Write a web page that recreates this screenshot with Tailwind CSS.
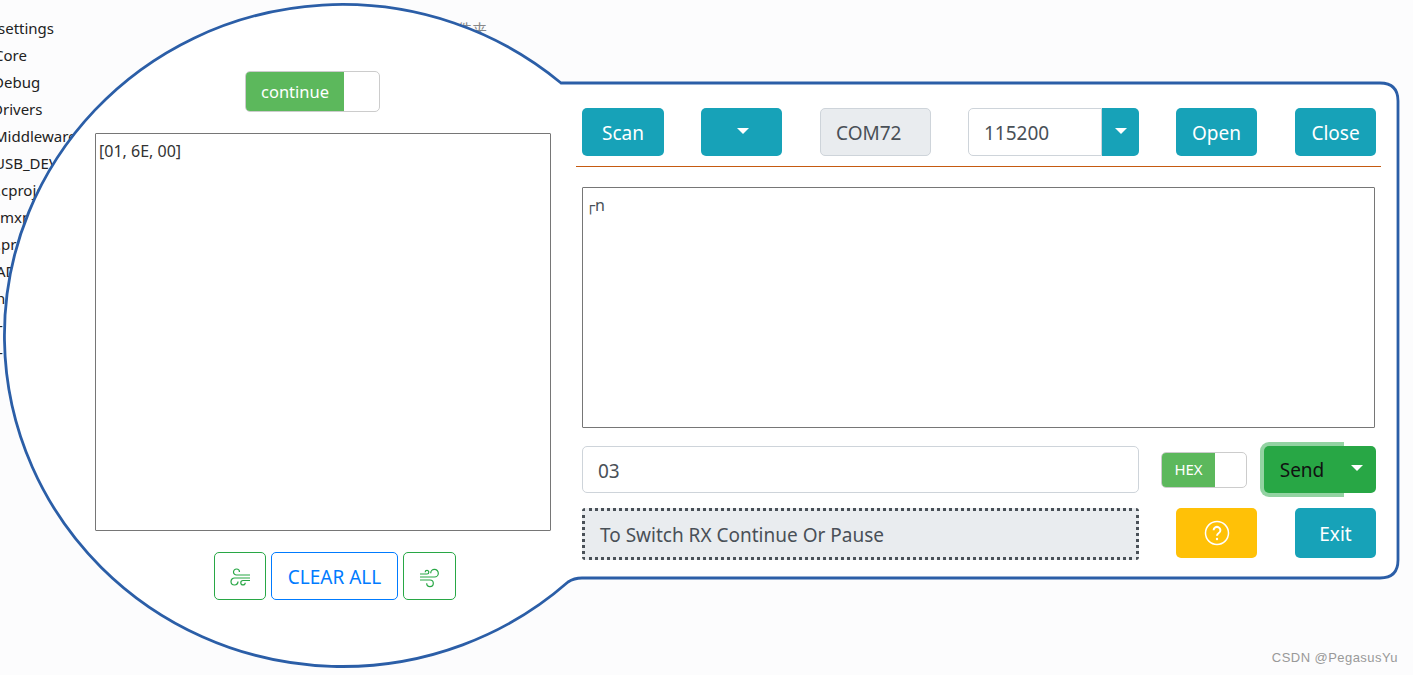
<!DOCTYPE html>
<html lang="en">

<head>
    <meta charset="UTF-8">
    <script src="https://cdn.jsdelivr.net/npm/@tailwindcss/browser@4"></script>
    <title>Serial Terminal</title>
</head>

<body class="bg-[#fcfcfd] font-['Noto_Sans','Open_Sans',sans-serif] text-[#495057]">
    <div class="relative w-[1413px] h-[675px] overflow-hidden">
        <!-- file list behind the magnifier -->
        <ul class="pt-[15px] text-[15px] leading-[27px] text-[#222] whitespace-nowrap">
            <li class="-ml-[2px] flex">
                <span class="w-[444px]">settings</span>
                <span class="text-[#888] font-['Noto_Sans_CJK_SC',sans-serif]">文件夹</span>
            </li>
            <li class="-ml-[6px]">Core</li>
            <li class="-ml-[7px]">Debug</li>
            <li class="-ml-[8px]">Drivers</li>
            <li class="-ml-[6px]">Middleware</li>
            <li class="-ml-[6px]">USB_DEVICE</li>
            <li class="-ml-[3px]">.cproject</li>
            <li class="-ml-[4px]">.mxproject</li>
            <li class="-ml-[3px]">.project</li>
            <li class="-ml-[4px]">ADC</li>
            <li class="-ml-[4px]">n</li>
            <li class="-ml-[2px]">-</li>
            <li class="-ml-[2px]">-</li>
        </ul>

        <svg class="absolute inset-0" width="1413" height="675" viewBox="0 0 1413 675">
            <path d="M561 83 H1380 Q1398 83 1398 101 V560 Q1398 578 1380 578 H582 Q574 578 568 582 A338 331 0 1 1 561 83 Z"
                fill="#fff" stroke="#2b5ea7" stroke-width="2.8" />
        </svg>

        <div class="absolute inset-0 flex">
            <!-- RX column -->
            <div class="w-[576px] pl-[95px] pr-[25px] pt-[71px] flex flex-col items-center">
                <div class="mr-[21px] w-[135px] h-[41px] flex rounded-[5px] border border-[#ccc] overflow-hidden bg-white">
                    <div class="w-[98px] pt-[2px] bg-[#5cb85c] text-white text-[16.5px] flex items-center justify-center">continue</div>
                </div>
                <div class="mt-[21px] w-full h-[398px] border border-[#767676] rounded-[1px] px-[3px] py-[4px] text-[16px] leading-[26px] text-[#333] bg-white">[01, 6E, 00]</div>
                <div class="ml-[24px] mt-[21px] flex gap-[5px]">
                    <button class="w-[52px] h-[48px] border border-[#28a745] rounded-[5px] flex items-center justify-center text-[#28a745]">
                        <svg class="mt-[4px]" width="20" height="20" viewBox="0 0 20 20" fill="none" stroke="currentColor" stroke-width="1.2"><path d="M20 7H6.5a3 3 0 1 1 3-3M20 10H4.5a3.5 3.5 0 1 0 3.5 3.5M20 12.5H13a2.2 2.2 0 1 0 2.2 2.2"/></svg>
                    </button>
                    <button class="w-[127px] h-[48px] pt-[2px] border border-[#007bff] rounded-[5px] text-[#007bff] text-[19px]">CLEAR ALL</button>
                    <button class="w-[53px] h-[48px] border border-[#28a745] rounded-[5px] flex items-center justify-center text-[#28a745]">
                        <svg class="mt-[4px]" width="20" height="20" viewBox="0 0 20 20" fill="none" stroke="currentColor" stroke-width="1.2"><path d="M0 6H7a1.8 1.8 0 1 0-1.8-1.8M0 9H14.5a3.8 3.8 0 1 0-3.8-3.8M0 12H10a3.3 3.3 0 1 1-3.3 3.3"/></svg>
                    </button>
                </div>
            </div>

            <!-- TX column -->
            <div class="w-[805px] pt-[108px] text-[19px]">
                <div class="pl-[6px] flex h-[48px]">
                    <button class="w-[82px] pt-[2px] rounded-[5px] bg-[#17a2b8] text-white">Scan</button>
                    <button class="ml-[37px] w-[81px] rounded-[5px] bg-[#17a2b8] flex items-center justify-center">
                        <span class="mb-[3px] ml-[2px] border-x-[6px] border-x-transparent border-t-[6px] border-t-white"></span>
                    </button>
                    <div class="ml-[38px] w-[111px] pt-[2px] rounded-[5px] border border-[#ced4da] bg-[#e9ecef] pl-[15px] flex items-center">COM72</div>
                    <div class="ml-[37px] w-[171px] flex">
                        <div class="flex-1 pt-[2px] rounded-l-[5px] border border-[#ced4da] bg-white pl-[15px] flex items-center">115200</div>
                        <button class="w-[37px] rounded-r-[5px] bg-[#17a2b8] flex items-center justify-center">
                            <span class="mb-[3px] border-x-[6px] border-x-transparent border-t-[6px] border-t-white"></span>
                        </button>
                    </div>
                    <button class="ml-[37px] w-[81px] pt-[2px] rounded-[5px] bg-[#17a2b8] text-white">Open</button>
                    <button class="ml-[38px] w-[81px] pt-[2px] rounded-[5px] bg-[#17a2b8] text-white">Close</button>
                </div>
                <div class="mt-[10px] h-[1px] bg-[#c55a11]"></div>
                <div class="ml-[6px] mr-[6px] mt-[20px] h-[241px] border border-[#767676] rounded-[1px] pl-[3px] text-[16px] leading-[34px] bg-white"><span class="text-[15px] font-['DejaVu_Sans',sans-serif]">┌</span><span>n</span></div>
                <div class="mt-[18px] pl-[6px] pr-[5px] flex items-center h-[47px]">
                    <div class="w-[557px] h-full pt-[4px] rounded-[5px] border border-[#ced4da] bg-white pl-[15px] flex items-center">03</div>
                    <div class="ml-[22px] w-[86px] h-[36px] flex rounded-[5px] border border-[#ccc] overflow-hidden">
                        <div class="w-[53px] bg-[#5cb85c] text-white text-[15px] flex items-center justify-center">HEX</div>
                    </div>
                    <div class="ml-[17px] h-full flex">
                        <button class="relative z-10 w-[76px] pt-[2px] rounded-l-[5px] bg-[#28a745] text-[#111] shadow-[0_0_0_4px_rgba(40,167,69,0.5)]">Send</button>
                        <button class="w-[36px] rounded-r-[5px] bg-[#28a745] flex items-center justify-center">
                            <span class="mb-[3px] mr-[2px] border-x-[6px] border-x-transparent border-t-[6px] border-t-white"></span>
                        </button>
                    </div>
                </div>
                <div class="mt-[15px] pl-[6px] pr-[5px] flex h-[50px]">
                    <div class="w-[557px] h-[52px] pt-[3px] rounded-[3px] border-[3px] border-dotted border-[#495057] bg-[#e9ecef] pl-[15px] flex items-center">To Switch RX Continue Or Pause</div>
                    <button class="ml-[37px] w-[81px] rounded-[5px] bg-[#ffc107] flex items-center justify-center">
                        <svg width="26" height="26" viewBox="0 0 26 26" fill="none" stroke="#fff" stroke-width="1.5"><circle cx="13" cy="13" r="11.5"/><path d="M9.6 10.2a3.4 3.3 0 1 1 5.2 2.8c-1.2.8-1.8 1.4-1.8 2.8" stroke-width="2"/><circle cx="13" cy="19" r="1.2" fill="#fff" stroke="none"/></svg>
                    </button>
                    <button class="ml-[38px] w-[81px] pt-[2px] rounded-[5px] bg-[#17a2b8] text-white">Exit</button>
                </div>
            </div>
        </div>

        <div class="absolute right-[15px] bottom-[8px] text-[13px] tracking-[0.45px] text-[#999] font-['Liberation_Sans',sans-serif]">CSDN @PegasusYu</div>
    </div>
</body>

</html>
